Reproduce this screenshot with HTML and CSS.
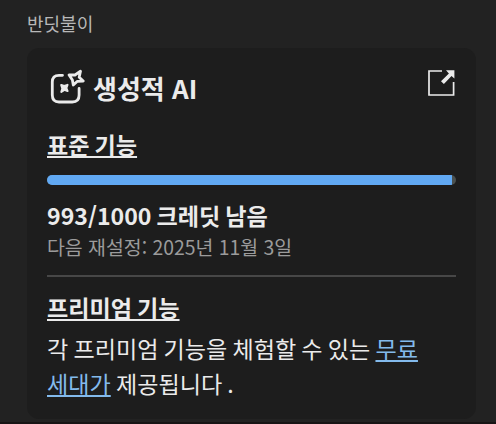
FILE: index.html
```html
<!DOCTYPE html>
<html lang="ko">
<head>
<meta charset="utf-8">
<title>생성적 AI</title>
<link rel="stylesheet" href="styles.css">
</head>
<body>
<main class="panel">
  <p class="plan">반딧불이</p>
  <section class="card">
    <header class="card-header">
      <svg class="ai-icon" viewBox="0 0 36 36" fill="none" stroke="#ebebeb" stroke-width="2.8" stroke-linecap="round" stroke-linejoin="round">
        <path d="M13.5 7.3H10Q3.3 7.3 3.3 14V27Q3.3 34 10 34H23.3Q30.1 34 30.1 27V20.5"/>
        <path stroke-width="2.8" d="M31.5 3.2L30.2 9.2L34.2 13.1L28.4 13.3L24.3 17L23.4 12.1L20.1 6.9L26 7Z"/>
        <path fill="#ebebeb" stroke-width="2" d="M12.2 16.9L15.2 18L18.5 16.9L17.4 20L18.6 23L15.4 21.9L12.3 24L13.3 20.4Z"/>
      </svg>
      <h1 class="card-title">생성적 AI</h1>
      <svg class="open-icon" viewBox="0 0 28 28">
        <path fill="none" stroke="#ebebeb" stroke-width="1.7" d="M14 3H1V27H25.6V14"/>
        <path fill="#ebebeb" d="M18 2.2H26.4V10.6L23.5 8.1L15.9 16L13 13.2L20.9 5.5Z"/>
      </svg>
    </header>
    <h2 class="section-title">표준 기능</h2>
    <div class="meter"><div class="meter-fill"></div></div>
    <p class="credits">993/1000 크레딧 남음</p>
    <p class="reset">다음 재설정: 2025년 11월 3일</p>
    <hr class="divider">
    <h2 class="section-title">프리미엄 기능</h2>
    <div class="description">
      <p>각 프리미엄 기능을 체험할 수 있는 <a class="link">무료</a></p>
      <p><a class="link">세대가</a> 제공됩니다 .</p>
    </div>
  </section>
</main>
</body>
</html>
```
FILE: styles.css
```css
* { box-sizing: border-box; }
body {
  margin: 0;
  height: 424px;
  overflow: hidden;
  background: #222;
  color: #ebebeb;
  font-family: "Noto Sans CJK KR", sans-serif;
}
h1, h2, p { margin: 0; white-space: nowrap; }
.panel {
  height: 424px;
  padding: 8px 20px 0 27px;
  border-bottom: 2px solid #171415;
}
.plan { font-size: 18px; line-height: 30px; color: #b8b8b8; }
.card {
  height: 371px;
  margin-top: 10px;
  padding: 20px 20px 0;
  border-radius: 12px;
  background: #1d1d1d;
}
.card-header { display: flex; height: 40px; align-items: flex-start; }
.ai-icon { width: 36px; height: 36px; margin-left: 2px; }
.card-title { margin-left: 8px; font-size: 26px; line-height: 40px; font-weight: 700; }
.open-icon { width: 28px; height: 28px; margin-left: auto; }
.section-title {
  font-size: 23.1px;
  line-height: 36px;
  font-weight: 700;
  word-spacing: -1.4px;
  text-decoration: underline;
  text-decoration-thickness: 2px;
  text-underline-offset: 2px;
  text-decoration-skip-ink: none;
}
.card-header + .section-title { margin-top: 18px; }
.meter {
  height: 10px;
  margin-top: 13px;
  border-radius: 5px;
  overflow: hidden;
  background: #4b5150;
}
.meter-fill { width: 99.1%; height: 100%; background: #61a9f3; }
.credits { margin-top: 13px; font-size: 23.1px; line-height: 34px; font-weight: 700; word-spacing: -1.4px; }
.reset { margin-top: 1px; font-size: 19.4px; line-height: 28px; color: #9b9b9b; }
.divider { height: 2px; margin: 14px 0 12px; border: 0; background: #474747; }
.description { margin-top: 6px; font-size: 23.1px; line-height: 35px; word-spacing: -1.3px; }
.link {
  color: #83baec;
  text-decoration: underline;
  text-decoration-thickness: 2px;
  text-underline-offset: 2px;
  text-decoration-skip-ink: none;
}
```
